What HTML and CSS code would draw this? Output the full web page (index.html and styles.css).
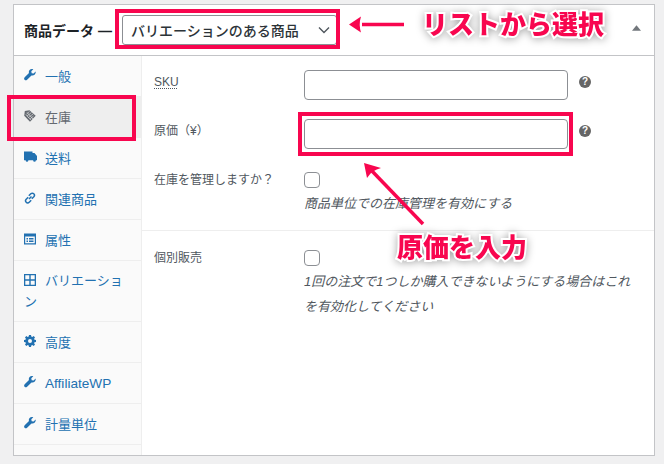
FILE: index.html
```html
<!DOCTYPE html>
<html lang="ja">
<head>
<meta charset="utf-8">
<title>商品データ</title>
<link rel="stylesheet" href="styles.css">
</head>
<body>
<div class="panel">
  <header class="head">
    <span class="head-title">商品データ —</span>
    <div class="select">
      <span>バリエーションのある商品</span>
      <svg class="chev" viewBox="0 0 12 8" width="12" height="8"><path d="M1 1.500l5 5 5-5" fill="none" stroke="#50575e" stroke-width="1.400"/></svg>
    </div>
    <svg class="toggle" viewBox="0 0 10 6" width="9" height="6"><path d="M5 0l5 6H0z" fill="#72777c"/></svg>
  </header>
  <div class="body">
    <nav class="tabs">
      <a class="tab"><svg class="ic" viewBox="0 0 12 12"><path d="M11.600 2.600l-2 2-1.900-.4-.4-1.900 2-2C7.900-.2 6.400.1 5.600 1 4.800 1.800 4.600 3 5 4L.7 8.300c-.8.800-.8 1.800-.1 2.500.7.700 1.700.7 2.500-.1L7.500 6.400c1 .4 2.200.2 3-.6.900-.8 1.400-2.100 1.100-3.200z"/></svg><span>一般</span></a>
      <a class="tab active"><svg class="ic" viewBox="0 0 12 12"><path d="M5.500.3L11.700 5.800 6 11.700.2 5.800.8 1z"/><path d="M2.500 4l3-2.500M3 6l4.500-3.500M4.500 7.500L9 4M6 9l3.500-3M3 2.500l6 6.500M1.800 4.500l5 5.500" stroke="#eee" stroke-width=".6" fill="none"/></svg><span>在庫</span></a>
      <a class="tab tab-wide"><svg class="ic ic-w" viewBox="0 0 13 11"><path d="M0 .5h8.500V2h2L13 5v4.200H0z"/><circle cx="3" cy="9.500" r="1.300"/><circle cx="10.500" cy="9.500" r="1.300"/></svg><span>送料</span></a>
      <a class="tab"><svg class="ic" viewBox="0 0 12 12" fill="none"><path d="M5 7l2.500-2.500M4.800 3.800l2-2c.9-.9 2.200-.9 3 0 .8.800.8 2.100 0 3l-2 2M7.200 8.200l-2 2c-.9.900-2.200.900-3 0-.8-.8-.8-2.100 0-3l2-2" stroke="#2271b1" stroke-width="1.500" fill="none"/></svg><span>関連商品</span></a>
      <a class="tab"><svg class="ic" viewBox="0 0 12 12"><path fill-rule="evenodd" d="M0 .5h12v11H0zM1.200 3.500v6.800h9.600V3.500z"/><path d="M2.500 5h1.500v1.500H2.500zM5 5h4.500v1.500H5zM2.500 7.500h1.500V9H2.500zM5 7.500h4.500V9H5z"/></svg><span>属性</span></a>
      <a class="tab tab-tall"><svg class="ic" viewBox="0 0 12 12"><path fill-rule="evenodd" d="M0 0h12v12H0zM1.300 1.300v4h4v-4zm5.400 0v4h4v-4zM1.300 6.700v4h4v-4zm5.400 0v4h4v-4z"/></svg><span>バリエーション</span></a>
      <a class="tab"><svg class="ic" viewBox="0 0 12 12"><path fill-rule="evenodd" d="M5 0h2l.3 1.600 1 .4L9.700 1.100l1.300 1.300-.9 1.400.4 1 1.500.2v2l-1.500.3-.4 1 .9 1.300L9.700 10.900l-1.400-.9-1 .4L7 12H5l-.3-1.600-1-.4-1.400.9L1 9.600l.9-1.300-.4-1L0 7V5l1.500-.2.400-1L1 2.400 2.300 1.100l1.400.9 1-.4zM6 4a2 2 0 1 0 0 4 2 2 0 0 0 0-4z"/></svg><span>高度</span></a>
      <a class="tab"><svg class="ic" viewBox="0 0 12 12"><path d="M11.600 2.600l-2 2-1.900-.4-.4-1.900 2-2C7.900-.2 6.400.1 5.600 1 4.800 1.800 4.600 3 5 4L.7 8.300c-.8.800-.8 1.800-.1 2.500.7.700 1.700.7 2.500-.1L7.500 6.400c1 .4 2.200.2 3-.6.900-.8 1.400-2.100 1.100-3.200z"/></svg><span class="tab-latin">AffiliateWP</span></a>
      <a class="tab"><svg class="ic" viewBox="0 0 12 12"><path d="M11.600 2.600l-2 2-1.900-.4-.4-1.900 2-2C7.900-.2 6.400.1 5.600 1 4.800 1.800 4.600 3 5 4L.7 8.300c-.8.800-.8 1.800-.1 2.500.7.700 1.700.7 2.500-.1L7.500 6.400c1 .4 2.200.2 3-.6.900-.8 1.400-2.100 1.100-3.200z"/></svg><span>計量単位</span></a>
    </nav>
    <main class="form">
      <section class="group">
        <div class="row row-field">
          <label class="lbl"><abbr class="abbr">SKU</abbr></label>
          <div class="input"></div>
          <span class="help">?</span>
        </div>
        <div class="row row-field row-second">
          <label class="lbl">原価（¥）</label>
          <div class="input"></div>
          <span class="help">?</span>
        </div>
        <div class="row row-check">
          <label class="lbl lbl-check">在庫を管理しますか？</label>
          <div class="check-col">
            <div class="check"></div>
            <p class="desc">商品単位での在庫管理を有効にする</p>
          </div>
        </div>
      </section>
      <section class="group group-last">
        <div class="row row-check">
          <label class="lbl lbl-single">個別販売</label>
          <div class="check-col">
            <div class="check"></div>
            <p class="desc">1回の注文で1つしか購入できないようにする場合はこれを有効化してください</p>
          </div>
        </div>
      </section>
    </main>
  </div>
</div>
<div class="mark mark-select"></div>
<div class="mark mark-tab"></div>
<div class="mark mark-input"></div>
<svg class="arrows" width="664" height="464" viewBox="0 0 664 464">
  <path d="M404 24.500H362" stroke="#f8064f" stroke-width="3.500" fill="none"/>
  <path d="M349 24.500L361 16.500Q358.500 24.500 361 32.500z" fill="#f8064f"/>
  <path d="M423 224L372 171" stroke="#f8064f" stroke-width="3.500" fill="none"/>
  <path d="M364 163L381 168Q372 170 367 178z" fill="#f8064f"/>
</svg>
<span class="note note-select">リストから選択</span>
<span class="note note-input">原価を入力</span>
</body>
</html>
```
FILE: styles.css
```css
* { box-sizing: border-box; }
html, body { margin: 0; padding: 0; }
body {
  width: 664px;
  height: 464px;
  overflow: hidden;
  padding: 4px 0 0 13px;
  background: #f0f0f1;
  font-family: "Liberation Sans", "Noto Sans CJK JP", sans-serif;
  font-size: 13px;
  color: #50575e;
  position: relative;
}
.panel {
  width: 642px;
  height: 452px;
  background: #fff;
  border: 1px solid #c3c4c7;
  display: flex;
  flex-direction: column;
}
.head {
  height: 51px;
  flex: none;
  display: flex;
  align-items: center;
  padding-left: 10px;
  border-bottom: 1px solid #c3c4c7;
}
.head-title {
  font-size: 14px;
  font-weight: 700;
  color: #1d2327;
  width: 98px;
  flex: none;
  white-space: nowrap;
}
.select {
  width: 215px;
  height: 30px;
  flex: none;
  border: 1px solid #8c8f94;
  border-radius: 3px;
  display: flex;
  align-items: center;
  justify-content: space-between;
  padding: 0 6px 0 8px;
  font-family: "Noto Sans CJK JP", sans-serif;
  font-size: 14px;
  font-weight: 500;
  color: #2c3338;
}
.toggle { margin: 0 13px 4px auto; }
.body { flex: 1; display: flex; min-height: 0; }
.tabs {
  width: 128px;
  flex: none;
  background: #fafafa;
  border-right: 1px solid #eee;
  display: flex;
  flex-direction: column;
}
.tab {
  height: 41px;
  flex: none;
  display: flex;
  align-items: flex-start;
  gap: 9px;
  padding: 12px 8px 0 10px;
  border-bottom: 1px solid #eee;
  color: #2271b1;
  line-height: 17px;
  font-size: 13px;
}
.tab-wide { gap: 8px; }
.tab-latin { font-size: 13.600px; }
.tab-tall {
  display: block;
  height: 61px;
  padding: 9px 12px 0 10px;
  line-height: 21px;
}
.tab-tall .ic { display: inline-block; margin: 0 9px 0 0; vertical-align: -1px; }
.tab.active { background: #eee; color: #646970; }
.ic { width: 12px; height: 12px; flex: none; fill: #2271b1; margin-top: 1px; }
.ic-w { width: 13px; height: 11px; }
.active .ic { fill: #646970; }
.form { flex: 1; min-width: 0; }
.group { border-bottom: 1px solid #eee; padding: 14px 0 0 12px; height: 175px; }
.group-last { border-bottom: 0; padding-top: 19px; height: auto; }
.row { display: flex; align-items: flex-start; }
.row-field { height: 30px; }
.row-second { margin-top: 19px; }
.row-check { margin-top: 23px; }
.group-last .row-check { margin-top: 0; }
.lbl { width: 150px; flex: none; font-size: 12px; line-height: 20px; color: #50575e; padding-top: 2px; }
.lbl-check { padding-top: 0; margin-top: -2px; }
.lbl-single { padding-top: 0; margin-top: -2px; }
.abbr { text-decoration: underline dotted; text-underline-offset: 2px; }
.input {
  width: 264px;
  height: 30px;
  background: #fff;
  border: 1px solid #8c8f94;
  border-radius: 4px;
}
.help {
  width: 12px;
  height: 12px;
  margin: 6px 0 0 11px;
  border-radius: 50%;
  background: #666;
  color: #fff;
  font-size: 10px;
  font-weight: 700;
  line-height: 12px;
  text-align: center;
}
.check-col { width: 330px; }
.check {
  width: 16px;
  height: 16px;
  border: 1px solid #8c8f94;
  border-radius: 4px;
  background: #fff;
}
.desc {
  margin: 3px 0 0;
  font-size: 13px;
  line-height: 25px;
  font-style: italic;
  color: #50575e;
}
.mark { position: absolute; border: 4px solid #f8064f; }
.mark-select { left: 115px; top: 9px; width: 225px; height: 40px; }
.mark-tab { left: 7px; top: 95px; width: 129px; height: 46px; }
.mark-input { left: 298px; top: 112px; width: 275px; height: 44px; }
.arrows { position: absolute; left: 0; top: 0; pointer-events: none; }
.note {
  position: absolute;
  font-family: "Noto Sans CJK JP", sans-serif;
  font-weight: 900;
  color: #f8064f;
  -webkit-text-stroke: 4px #fff;
  paint-order: stroke fill;
  filter: drop-shadow(0 1px 4px rgba(0, 0, 0, .35));
  white-space: nowrap;
  line-height: 1;
}
.note-select { left: 422px; top: 10px; font-size: 26px; }
.note-input { left: 397px; top: 233px; font-size: 26px; }
```
